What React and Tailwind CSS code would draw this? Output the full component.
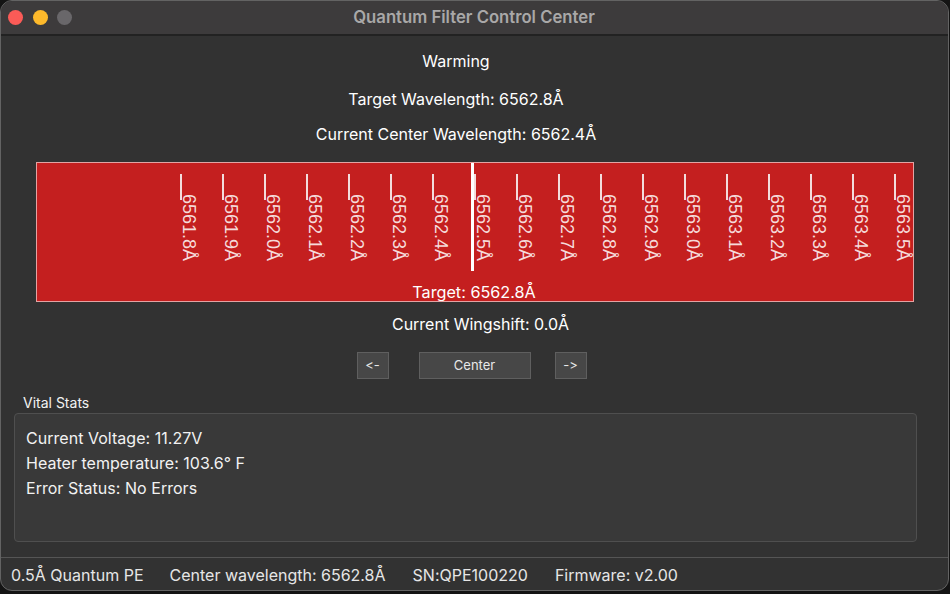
const ticks = [
  "6561.8Å", "6561.9Å", "6562.0Å", "6562.1Å", "6562.2Å", "6562.3Å", "6562.4Å", "6562.5Å", "6562.6Å",
  "6562.7Å", "6562.8Å", "6562.9Å", "6563.0Å", "6563.1Å", "6563.2Å", "6563.3Å", "6563.4Å", "6563.5Å",
];

function Tick({ label }) {
  return (
    <div className="relative w-[42px] h-[100px] shrink-0">
      <div className="w-[1.5px] h-[26px] bg-[#f3dcdc]"></div>
      <span className="absolute left-0 top-[20px] [writing-mode:vertical-rl] font-['Liberation_Sans',sans-serif] text-[18px] leading-[18px] text-[#f5dada] whitespace-nowrap">
        {label}
      </span>
    </div>
  );
}

export default function App() {
  return (
    <div className="w-[950px] h-[594px] bg-[#141414] overflow-hidden font-['Inter',sans-serif] text-[#f2f2f2] [font-feature-settings:'calt'_0]">
      <div className="w-[949px] h-[591px] flex flex-col bg-[#323232] rounded-[12px] border border-[#636363] overflow-hidden">

        {/* title bar */}
        <div className="h-[35px] shrink-0 flex items-center bg-[#3d3b3c] border-b-2 border-[#222222]">
          <div className="flex items-center gap-[9.5px] pl-[7px]">
            <div className="w-[15px] h-[15px] rounded-full bg-[#fb5b57]"></div>
            <div className="w-[15px] h-[15px] rounded-full bg-[#fdb92b]"></div>
            <div className="w-[15px] h-[15px] rounded-full bg-[#69676a]"></div>
          </div>
          <div className="flex-1 text-center pr-[72px] text-[16.7px] font-semibold text-[#a9a8a8]">
            Quantum Filter Control Center
          </div>
        </div>

        <div className="flex-1 flex flex-col items-center">
          <div className="flex flex-col items-center pr-[37px]">
            <p className="mt-[15px] h-[20px] leading-[20px] text-[16px] text-white">Warming</p>
            <p className="mt-[18px] h-[20px] leading-[20px] text-[16px] text-white">Target Wavelength: 6562.8Å</p>
            <p className="mt-[15px] h-[20px] leading-[20px] text-[16px] text-white">Current Center Wavelength: 6562.4Å</p>
          </div>

          {/* wavelength ruler */}
          <div className="relative mt-[18px] w-[878px] h-[140px] ml-[1px] bg-[#c41f1f] border border-[#e3a3a3] overflow-hidden">
            <div className="flex pl-[143px] pt-[11px]">
              {ticks.map((t) => (
                <Tick key={t} label={t} />
              ))}
            </div>
            <div className="absolute left-[433.5px] top-0 w-[3.5px] h-[108px] bg-white"></div>
            <div className="absolute inset-x-0 bottom-[-1px] pr-[2px] text-center text-[16.2px] leading-[20px] text-white">Target: 6562.8Å</div>
          </div>

          <p className="mt-[12px] ml-[12px] h-[20px] leading-[20px] text-[16px] text-white">Current Wingshift: 0.0Å</p>

          <div className="mt-[18px] mr-[6px] flex items-center">
            <button className="w-[32px] h-[27px] bg-[#474747] border border-[#5f5f5f] text-[13px] text-[#e8e8e8]">{"<-"}</button>
            <button className="ml-[30px] w-[112px] h-[27px] bg-[#474747] border border-[#5f5f5f] text-[13px] text-[#e8e8e8]">Center</button>
            <button className="ml-[24px] w-[32px] h-[27px] bg-[#474747] border border-[#5f5f5f] text-[13px] text-[#e8e8e8]">{"->"}</button>
          </div>

          {/* vital stats */}
          <div className="self-stretch mt-[16px] pl-[13px] pr-[31px]">
            <p className="pl-[9px] h-[18px] leading-[16px] text-[14px]">Vital Stats</p>
            <div className="h-[129px] bg-[#393939] border border-[#4f4f4f] rounded-[4px] pl-[11px] pt-[12px] text-[16px] tracking-[0.03px] leading-[25px]">
              <p>Current Voltage: 11.27V</p>
              <p>Heater temperature: 103.6° F</p>
              <p>Error Status: No Errors</p>
            </div>
          </div>
        </div>

        {/* status bar */}
        <div className="h-[33px] shrink-0 flex items-center border-t border-[#555555] pl-[10px] pt-[1px] text-[16px] text-[#e6e6e6]">
          <span>0.5Å Quantum PE</span>
          <span className="ml-[26px]">Center wavelength: 6562.8Å</span>
          <span className="ml-[27px]">SN:QPE100220</span>
          <span className="ml-[27px]">Firmware: v2.00</span>
        </div>
      </div>
    </div>
  );
}
